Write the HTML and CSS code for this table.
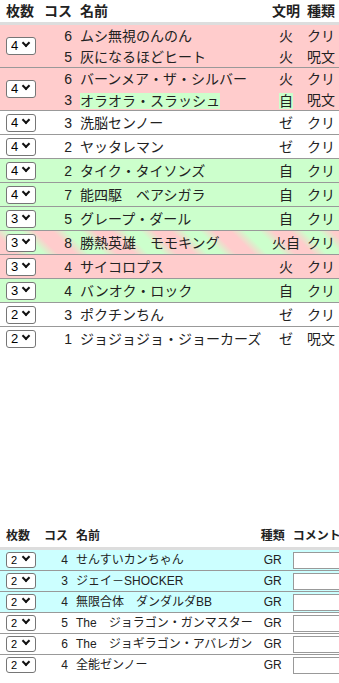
FILE: index.html
```html
<!DOCTYPE html>
<html lang="ja">
<head>
<meta charset="utf-8">
<title>デッキ</title>
<link rel="stylesheet" href="styles.css">
</head>
<body>
<table class="deck">
  <thead>
    <tr><th class="c-num">枚数</th><th class="c-cost">コス</th><th class="c-name">名前</th><th class="c-civ">文明</th><th class="c-type">種類</th></tr>
  </thead>
  <tbody class="grp fire">
    <tr class="sub"><td class="c-num" rowspan="2"><span class="sel"><select class="cnt"><option>1</option><option>2</option><option>3</option><option selected>4</option></select></span></td><td class="c-cost">6</td><td class="c-name">ムシ無視のんのん</td><td class="c-civ">火</td><td class="c-type">クリ</td></tr>
    <tr class="sub"><td class="c-cost">5</td><td class="c-name">灰になるほどヒート</td><td class="c-civ">火</td><td class="c-type">呪文</td></tr>
  </tbody>
  <tbody class="grp fire">
    <tr class="sub"><td class="c-num" rowspan="2"><span class="sel"><select class="cnt"><option>1</option><option>2</option><option>3</option><option selected>4</option></select></span></td><td class="c-cost">6</td><td class="c-name">バーンメア・ザ・シルバー</td><td class="c-civ">火</td><td class="c-type">クリ</td></tr>
    <tr class="sub"><td class="c-cost">3</td><td class="c-name"><span class="mark nature">オラオラ・スラッシュ</span></td><td class="c-civ"><span class="mark nature">自</span></td><td class="c-type">呪文</td></tr>
  </tbody>
  <tbody class="grp">
    <tr class="one"><td class="c-num"><span class="sel"><select class="cnt"><option>1</option><option>2</option><option>3</option><option selected>4</option></select></span></td><td class="c-cost">3</td><td class="c-name">洗脳センノー</td><td class="c-civ">ゼ</td><td class="c-type">クリ</td></tr>
  </tbody>
  <tbody class="grp">
    <tr class="one"><td class="c-num"><span class="sel"><select class="cnt"><option>1</option><option>2</option><option>3</option><option selected>4</option></select></span></td><td class="c-cost">2</td><td class="c-name">ヤッタレマン</td><td class="c-civ">ゼ</td><td class="c-type">クリ</td></tr>
  </tbody>
  <tbody class="grp nature">
    <tr class="one"><td class="c-num"><span class="sel"><select class="cnt"><option>1</option><option>2</option><option>3</option><option selected>4</option></select></span></td><td class="c-cost">2</td><td class="c-name">タイク・タイソンズ</td><td class="c-civ">自</td><td class="c-type">クリ</td></tr>
  </tbody>
  <tbody class="grp nature">
    <tr class="one"><td class="c-num"><span class="sel"><select class="cnt"><option>1</option><option>2</option><option>3</option><option selected>4</option></select></span></td><td class="c-cost">7</td><td class="c-name">能四駆　ベアシガラ</td><td class="c-civ">自</td><td class="c-type">クリ</td></tr>
  </tbody>
  <tbody class="grp nature">
    <tr class="one"><td class="c-num"><span class="sel"><select class="cnt"><option>1</option><option>2</option><option selected>3</option><option>4</option></select></span></td><td class="c-cost">5</td><td class="c-name">グレープ・ダール</td><td class="c-civ">自</td><td class="c-type">クリ</td></tr>
  </tbody>
  <tbody class="grp multi">
    <tr class="one"><td class="c-num"><span class="sel"><select class="cnt"><option>1</option><option>2</option><option selected>3</option><option>4</option></select></span></td><td class="c-cost">8</td><td class="c-name">勝熱英雄　モモキング</td><td class="c-civ">火自</td><td class="c-type">クリ</td></tr>
  </tbody>
  <tbody class="grp fire">
    <tr class="one"><td class="c-num"><span class="sel"><select class="cnt"><option>1</option><option>2</option><option selected>3</option><option>4</option></select></span></td><td class="c-cost">4</td><td class="c-name">サイコロプス</td><td class="c-civ">火</td><td class="c-type">クリ</td></tr>
  </tbody>
  <tbody class="grp nature">
    <tr class="one"><td class="c-num"><span class="sel"><select class="cnt"><option>1</option><option>2</option><option selected>3</option><option>4</option></select></span></td><td class="c-cost">4</td><td class="c-name">バンオク・ロック</td><td class="c-civ">自</td><td class="c-type">クリ</td></tr>
  </tbody>
  <tbody class="grp">
    <tr class="one"><td class="c-num"><span class="sel"><select class="cnt"><option>1</option><option selected>2</option><option>3</option><option>4</option></select></span></td><td class="c-cost">3</td><td class="c-name">ポクチンちん</td><td class="c-civ">ゼ</td><td class="c-type">クリ</td></tr>
  </tbody>
  <tbody class="grp">
    <tr class="one"><td class="c-num"><span class="sel"><select class="cnt"><option>1</option><option selected>2</option><option>3</option><option>4</option></select></span></td><td class="c-cost">1</td><td class="c-name">ジョジョジョ・ジョーカーズ</td><td class="c-civ">ゼ</td><td class="c-type">呪文</td></tr>
  </tbody>
</table>

<div class="gr-wrap">
<table class="gr">
  <thead>
    <tr><th class="c-num">枚数</th><th class="c-cost">コス</th><th class="c-name">名前</th><th class="c-kind">種類</th><th class="c-note">コメント</th></tr>
  </thead>
  <tbody>
    <tr class="water"><td class="c-num"><span class="sel small"><select class="cnt"><option>1</option><option selected>2</option></select></span></td><td class="c-cost">4</td><td class="c-name">せんすいカンちゃん</td><td class="c-kind">GR</td><td class="c-note"><input class="note" type="text"></td></tr>
    <tr class="water"><td class="c-num"><span class="sel small"><select class="cnt"><option>1</option><option selected>2</option></select></span></td><td class="c-cost">3</td><td class="c-name">ジェイ－SHOCKER</td><td class="c-kind">GR</td><td class="c-note"><input class="note" type="text"></td></tr>
    <tr class="water"><td class="c-num"><span class="sel small"><select class="cnt"><option>1</option><option selected>2</option></select></span></td><td class="c-cost">4</td><td class="c-name">無限合体　ダンダルダBB</td><td class="c-kind">GR</td><td class="c-note"><input class="note" type="text"></td></tr>
    <tr><td class="c-num"><span class="sel small"><select class="cnt"><option>1</option><option selected>2</option></select></span></td><td class="c-cost">5</td><td class="c-name">The　ジョラゴン・ガンマスター</td><td class="c-kind">GR</td><td class="c-note"><input class="note" type="text"></td></tr>
    <tr><td class="c-num"><span class="sel small"><select class="cnt"><option>1</option><option selected>2</option></select></span></td><td class="c-cost">6</td><td class="c-name">The　ジョギラゴン・アバレガン</td><td class="c-kind">GR</td><td class="c-note"><input class="note" type="text"></td></tr>
    <tr class="last"><td class="c-num"><span class="sel small"><select class="cnt"><option>1</option><option selected>2</option></select></span></td><td class="c-cost">4</td><td class="c-name">全能ゼンノー</td><td class="c-kind">GR</td><td class="c-note"><input class="note" type="text"></td></tr>
  </tbody>
</table>
</div>
</body>
</html>
```

FILE: styles.css
```css
html, body {
  margin: 0;
  padding: 0;
  background: #fff;
}
body {
  font-family: "Liberation Sans", "Noto Sans CJK JP", sans-serif;
  color: #222;
  overflow-x: hidden;
}

table {
  border-collapse: collapse;
  border-spacing: 0;
}

th, td {
  padding: 0 4px;
  white-space: nowrap;
  vertical-align: middle;
}
th {
  font-weight: bold;
  text-align: left;
}

.c-num { padding-left: 6px; }
.c-cost { text-align: right; }
.c-civ, .c-kind { text-align: center; }

/* ---- main deck table ---- */
.deck {
  width: 100%;
  font-size: 14px;
}
.deck th {
  height: 22px;
  line-height: 22px;
  border-bottom: 3px solid #ddd;
}
.deck .c-name { width: 100%; }
.deck .c-type { padding-left: 3px; }

.deck tbody.grp {
  border-bottom: 1px solid #999;
}
.deck tbody.grp:last-child {
  border-bottom: none;
}
.deck tr.sub td {
  height: 21px;
  line-height: 20px;
}
.deck tr.one td {
  height: 23px;
  line-height: 20px;
}

.fire { background: #ffcccc; }
.nature { background: #ccffcc; }
.water { background: #ccffff; }
.multi tr {
  background: repeating-linear-gradient(45deg, #ffcccc 0, #ffcccc 12px, #ccffcc 22px, #ccffcc 32px, #ffcccc 42px);
}

.mark {
  display: inline-block;
  line-height: 16px;
  vertical-align: middle;
}
.mark.nature { background: #ccffcc; }

/* ---- count selector ---- */
.sel {
  position: relative;
  display: block;
  width: 30px;
}
.sel::after {
  content: "";
  position: absolute;
  right: 7px;
  top: 3px;
  width: 4px;
  height: 4px;
  border-right: 2px solid #111;
  border-bottom: 2px solid #111;
  transform: rotate(45deg);
  pointer-events: none;
}
.cnt {
  -webkit-appearance: none;
  appearance: none;
  display: block;
  width: 30px;
  height: 18px;
  margin: 0;
  padding: 0 0 0 4px;
  box-sizing: border-box;
  font-family: "Liberation Sans", sans-serif;
  font-size: 13px;
  line-height: 16px;
  color: #000;
  background-color: #fff;
  border: 1px solid #767676;
  border-radius: 3px;
}
.sel.small::after {
  top: 2px;
  right: 7px;
}
.sel.small .cnt {
  height: 16px;
  font-size: 11px;
  line-height: 14px;
}

/* ---- GR table ---- */
.gr-wrap {
  margin-top: 176px;
  width: 100%;
  overflow: hidden;
}
.gr {
  font-size: 12px;
}
.gr th {
  height: 21px;
  line-height: 21px;
  border-bottom: 3px solid #ddd;
}
.gr td {
  height: 20px;
  line-height: 18px;
  border-bottom: 1px solid #999;
}
.gr tr.last td {
  border-bottom: none;
}
.note {
  display: block;
  width: 150px;
  height: 17px;
  margin: 0;
  padding: 0 2px;
  box-sizing: border-box;
  border: 1px solid #999;
  background: #fff;
  font-size: 12px;
}
```
